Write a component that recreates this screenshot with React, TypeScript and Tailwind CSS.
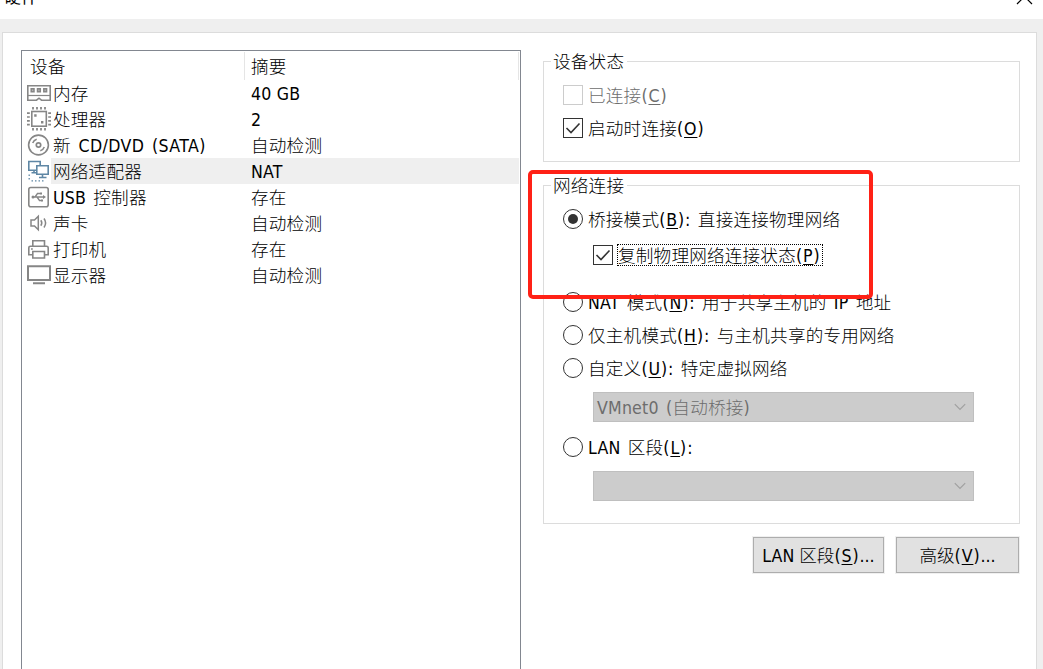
import { ReactNode } from 'react';

interface IDevice {
  name: string;
  summary: string;
  icon: ReactNode;
}

const MemoryIcon = () => (
  <svg width="24" height="26" viewBox="0 0 24 26" fill="none" stroke="#868686">
    <path d="M.8 5.800h22.400v14.400H14.500l-2.500-2-2.500 2H.8z" strokeWidth="1.600" />
    <path d="M1 15.500h22" strokeWidth="1.200" />
    <path
      d="M4.200 8.800h2.800v3h-2.800zM10.500 8.800h2.800v3h-2.800zM16.800 8.800h2.800v3h-2.800z"
      fill="#b4b4b4"
      strokeWidth="1.500"
    />
  </svg>
);

const CpuIcon = () => (
  <svg width="24" height="26" viewBox="0 0 24 26" fill="none" stroke="#868686">
    <rect x="4.800" y="5.500" width="14.500" height="14.700" strokeWidth="1.600" />
    <path d="M6 1v2.500M10 1v2.500M14 1v2.500M18 1v2.500M6 22v2.500M10 22v2.500M14 22v2.500M18 22v2.500" strokeWidth="1.800" />
    <path d="M0 7.200h2.800M0 11h2.800M0 14.800h2.800M0 18.600h2.800M21.200 7.200H24M21.200 11H24M21.200 14.800H24M21.200 18.600H24" strokeWidth="1.700" />
    <path d="M7.200 9.500h2.400M14 16.200h2.400" strokeWidth="2.400" />
  </svg>
);

const DiscIcon = () => (
  <svg width="24" height="26" viewBox="0 0 24 26" fill="none" stroke="#868686" strokeWidth="1.6">
    <circle cx="11.500" cy="13" r="9.900" />
    <circle cx="11.500" cy="13" r="2.200" strokeWidth="1.700" />
    <path d="M5.700 11Q6.800 8 9.700 7.200M17.300 15Q16.200 18 13.300 18.800" strokeWidth="1.500" />
  </svg>
);

const NetworkIcon = () => (
  <svg width="24" height="26" viewBox="0 0 24 26" fill="none" stroke="#5f87a5" strokeWidth="1.6">
    <path d="M9 12.200H1.800V3.500h11.400V7M4.500 14.800h4.800M7 12.500v2.300" />
    <path d="M9.800 7.800h11.400v8.400H9.800zM15.500 16.500v3M12 19.500h7.500" />
    <path d="M2.200 16.500v7M4.500 22.800h12" strokeWidth="1.300" strokeDasharray="1.500 2" />
  </svg>
);

const UsbIcon = () => (
  <svg width="24" height="26" viewBox="0 0 24 26" fill="none" stroke="#868686" strokeWidth="1.6">
    <rect x="1.800" y="3.500" width="19.400" height="19.200" rx="2" />
    <path d="M6 13h11M8 13l2.500-3.500H13M10 13l2.500 3.500h2" strokeWidth="1.300" />
    <circle cx="6" cy="13" r="1.500" fill="#868686" stroke="none" />
    <path d="M13 8.500h2v2h-2zM14 15.500h2v2h-2zM16 11l3 2-3 2z" fill="#868686" stroke="none" />
  </svg>
);

const SoundIcon = () => (
  <svg width="24" height="26" viewBox="0 0 24 26" fill="none" stroke="#868686" strokeWidth="1.5">
    <path d="M4 10h3.500l3.800-3.700v13.400L7.500 16H4z" />
    <path d="M13.800 10.300q2 2.700 0 5.400M17 8.500q3.200 4.500 0 9" />
  </svg>
);

const PrinterIcon = () => (
  <svg width="24" height="26" viewBox="0 0 24 26" fill="none" stroke="#868686" strokeWidth="1.6">
    <path d="M5.800 10V4.800h11.700V10M5.500 18.800H1.800v-7q0-1.600 1.600-1.600h16.200q1.600 0 1.600 1.600v7H17.800" />
    <path d="M5.800 15.500h11.700v6.500H5.800zM4 13h1.800" />
  </svg>
);

const DisplayIcon = () => (
  <svg width="24" height="26" viewBox="0 0 24 26" fill="none" stroke="#868686" strokeWidth="2">
    <path d="M1 4.200h22v13.800H1zM6 21.200h12" />
  </svg>
);

const DEVICES: IDevice[] = [
  { name: '内存', summary: '40 GB', icon: <MemoryIcon /> },
  { name: '处理器', summary: '2', icon: <CpuIcon /> },
  { name: '新 CD/DVD (SATA)', summary: '自动检测', icon: <DiscIcon /> },
  { name: '网络适配器', summary: 'NAT', icon: <NetworkIcon /> },
  { name: 'USB 控制器', summary: '存在', icon: <UsbIcon /> },
  { name: '声卡', summary: '自动检测', icon: <SoundIcon /> },
  { name: '打印机', summary: '存在', icon: <PrinterIcon /> },
  { name: '显示器', summary: '自动检测', icon: <DisplayIcon /> },
];

const SELECTED_DEVICE = '网络适配器';

const DeviceList = () => (
  <div className="h-[640px] w-[500px] shrink-0 border border-[#828790] px-px pt-px">
    <div className="flex h-7">
      <div className="flex w-[222px] items-center border-r border-[#e5e5e5] pt-0.5 pl-[7px]">设备</div>
      <div className="flex flex-1 items-center border-r border-[#e5e5e5] pt-0.5 pl-[6px]">摘要</div>
    </div>
    {DEVICES.map(({ name, summary, icon }) => (
      <div key={name} className="flex h-[26px] items-center pl-1">
        <div className="w-6 shrink-0">{icon}</div>
        <div
          className={`flex h-full flex-1 items-center pt-0.5 pl-[2px] ${name === SELECTED_DEVICE ? 'bg-[#efefef]' : ''}`}
        >
          <span className={`w-[198px] ${name.includes('CD/DVD') ? 'tracking-[0.42px]' : ''}`}>{name}</span>
          <span className="[word-spacing:0px]">{summary}</span>
        </div>
      </div>
    ))}
  </div>
);

const Key = ({ children }: { children: string }) => (
  <span className="tracking-[0.9px]">
    (<span className="underline decoration-1 underline-offset-2">{children}</span>)
  </span>
);

const Group = ({ title, className, children }: { title: string; className: string; children: ReactNode }) => (
  <section className={`flex flex-col border border-[#dcdcdc] pl-[19px] ${className}`}>
    <h2 className="-mt-3 -ml-3 h-6 self-start bg-white pr-[3px] pl-[2px] leading-6">{title}</h2>
    {children}
  </section>
);

const Checkbox = ({ checked, disabled }: { checked?: boolean; disabled?: boolean }) => (
  <span className={`size-5 shrink-0 border ${disabled ? 'border-[#cccccc]' : 'border-[#333333]'}`}>
    {checked && (
      <svg width="18" height="18" viewBox="0 0 18 18" fill="none" stroke="#333333" strokeWidth="1.6">
        <path d="M2.500 9l4.500 4.500L15.500 4.500" />
      </svg>
    )}
  </span>
);

const Radio = ({ checked }: { checked?: boolean }) => (
  <span className="flex size-5 shrink-0 items-center justify-center rounded-full border border-[#333333]">
    {checked && <span className="size-[10px] rounded-full bg-[#333333]" />}
  </span>
);

const Option = ({ control, className = '', children }: { control: ReactNode; className?: string; children: ReactNode }) => (
  <label className={`flex h-5 items-center gap-[5px] whitespace-pre ${className}`}>
    {control}
    <span className="pt-0.5">{children}</span>
  </label>
);

const Select = ({ className, children }: { className: string; children?: ReactNode }) => (
  <div
    className={`ml-[30px] flex h-[30px] w-[381px] shrink-0 items-center justify-between border border-[#bfbfbf] bg-[#cccccc] pr-[7px] pl-[3px] text-[#6d6d6d] ${className}`}
  >
    <span className="pt-0.5">{children}</span>
    <svg width="12" height="8" viewBox="0 0 12 8" fill="none" stroke="#a0a0a0" strokeWidth="1.2">
      <path d="M.8 1.200L6 6.400l5.200-5.200" />
    </svg>
  </div>
);

const Button = ({ className, children }: { className: string; children: ReactNode }) => (
  <button
    type="button"
    className={`flex h-9 items-center justify-center border border-[#adadad] bg-[#e1e1e1] pt-0.5 tracking-normal outline outline-[#f0f0f0] ${className}`}
  >
    <span>{children}</span>
  </button>
);

export default function App() {
  return (
    <div className="relative flex h-[669px] w-[1043px] flex-col overflow-hidden bg-[#efefef] font-['DejaVu_Sans_Condensed','Noto_Sans_CJK_SC',sans-serif] text-[17.6px] leading-5 font-light tracking-[0.2px] text-black [word-spacing:2px]">
      <header className="flex h-[19px] shrink-0 justify-between overflow-hidden bg-white pr-[10px] pl-1">
        <span className="-mt-[13px] text-[17px] font-normal tracking-normal">硬件</span>
        <svg className="-mt-3" width="17" height="17" viewBox="0 0 17 17" fill="none" stroke="#000000" strokeWidth="1.2">
          <path d="M1 1l15 15M16 1L1 16" />
        </svg>
      </header>

      <main className="mt-[13px] ml-[2px] flex h-[660px] w-[1035px] shrink-0 border border-[#dcdcdc] bg-white pt-[17px] pl-[18px]">
        <DeviceList />

        <div className="ml-[22px] flex w-[477px] flex-col pt-[11px]">
          <Group title="设备状态" className="h-[101px]">
            <Option control={<Checkbox disabled />} className="mt-[11px] text-[#6d6d6d]">
              已连接<Key>C</Key>
            </Option>
            <Option control={<Checkbox checked />} className="mt-[13px]">
              启动时连接<Key>O</Key>
            </Option>
          </Group>

          <Group title="网络连接" className="mt-[23px] h-[339px]">
            <Option control={<Radio checked />} className="mt-[11px]">
              桥接模式<Key>B</Key>: 直接连接物理网络
            </Option>
            <label className="mt-4 ml-[30px] flex h-5 items-center gap-1 whitespace-pre">
              <Checkbox checked />
              <span className="h-[22px] w-[206px] border border-dotted border-black leading-[22px]">
                复制物理网络连接状态<Key>P</Key>
              </span>
            </label>
            <Option control={<Radio />} className="mt-[27px]">
              NAT 模式<Key>N</Key>: 用于共享主机的 IP 地址
            </Option>
            <Option control={<Radio />} className="mt-[13px]">
              仅主机模式<Key>H</Key>: 与主机共享的专用网络
            </Option>
            <Option control={<Radio />} className="mt-[13px]">
              自定义<Key>U</Key>: 特定虚拟网络
            </Option>
            <Select className="mt-[14px]">VMnet0 (自动桥接)</Select>
            <Option control={<Radio />} className="mt-[15px]">
              LAN 区段<Key>L</Key>:
            </Option>
            <Select className="mt-[14px]" />
          </Group>

          <div className="mt-[13px] flex justify-end gap-3 pr-px">
            <Button className="w-[131px]">
              LAN 区段<Key>S</Key>...
            </Button>
            <Button className="w-[123px]">
              高级<Key>V</Key>...
            </Button>
          </div>
        </div>
      </main>

      {/* highlight drawn over the bridged mode options */}
      <div className="absolute top-[170px] left-[528px] h-[129px] w-[345px] rounded-[5px] border-4 border-[#ff2116]" />
    </div>
  );
}
